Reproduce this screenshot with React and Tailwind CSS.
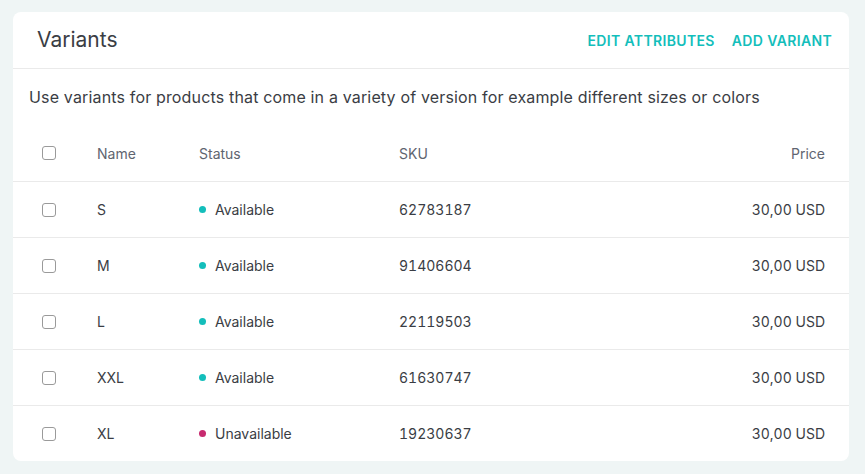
import React from 'react';

const variants = [
  { name: 'S', available: true, sku: '62783187', price: '30,00 USD' },
  { name: 'M', available: true, sku: '91406604', price: '30,00 USD' },
  { name: 'L', available: true, sku: '22119503', price: '30,00 USD' },
  { name: 'XXL', available: true, sku: '61630747', price: '30,00 USD' },
  { name: 'XL', available: false, sku: '19230637', price: '30,00 USD' },
];

const Checkbox = () => (
  <span className="block w-[14px] h-[14px] rounded-[3px] border-[1.5px] border-[#9a9a9a] bg-white" />
);

const Row = ({ children, header }) => (
  <div
    className={`flex items-center h-[56px] pl-[29px] pr-6 text-[14px] tabular-nums ${
      header ? 'text-[#5f6570]' : 'text-[#3a3d44] border-t border-[#eaeaea]'
    }`}
  >
    {children}
  </div>
);

const App = () => {
  return (
    <div
      className="min-h-[474px] w-[865px] bg-[#eff5f5] pt-3 pl-[13px] pr-4"
      style={{ fontFamily: 'Inter, "Noto Sans", sans-serif' }}
    >
      <div className="bg-white rounded-lg overflow-hidden">
        <div className="flex items-center justify-between h-[57px] pl-6 pr-[9px] border-b border-[#eaeaea]">
          <h2 className="text-[21px] text-[#3a3d44] font-normal">Variants</h2>
          <div className="flex items-center gap-[1px]">
            <button className="px-2 py-1 text-[14px] font-semibold tracking-[0.35px] text-[#13bebb] uppercase">
              Edit attributes
            </button>
            <button className="px-2 py-1 text-[14px] font-semibold tracking-[0.35px] text-[#13bebb] uppercase">
              Add variant
            </button>
          </div>
        </div>
        <div className="h-[56px] flex items-center px-4 text-[16px] tracking-[0.16px] text-[#3a3d44]">
          Use variants for products that come in a variety of version for example different sizes or colors
        </div>
        <div>
          <Row header>
            <div className="w-[55px]"><Checkbox /></div>
            <div className="w-[102px]">Name</div>
            <div className="w-[200px]">Status</div>
            <div className="flex-1">SKU</div>
            <div className="text-right">Price</div>
          </Row>
          {variants.map((v) => (
            <Row key={v.sku}>
              <div className="w-[55px]"><Checkbox /></div>
              <div className="w-[102px]">{v.name}</div>
              <div className="w-[200px] flex items-center gap-[9px]">
                <span
                  className={`w-[7px] h-[7px] rounded-full ${v.available ? 'bg-[#13bebb]' : 'bg-[#c72a6f]'}`}
                />
                {v.available ? 'Available' : 'Unavailable'}
              </div>
              <div className="flex-1">{v.sku}</div>
              <div className="text-right">{v.price}</div>
            </Row>
          ))}
        </div>
      </div>
    </div>
  );
};

export default App;
